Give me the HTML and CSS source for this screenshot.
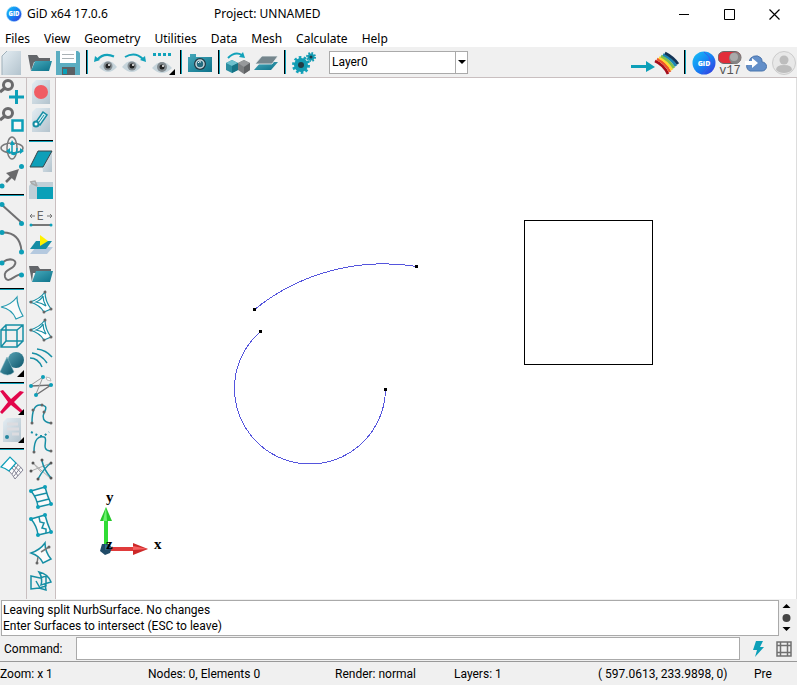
FILE: index.html
```html
<!DOCTYPE html>
<html lang="en">
<head>
<meta charset="utf-8">
<title>GiD x64 17.0.6</title>
<link rel="stylesheet" href="styles.css">
</head>
<body>
<header class="titlebar">
  <svg class="logo" viewBox="0 0 16 16">
    <defs>
      <linearGradient id="blue" x1="0" y1="0" x2="1" y2="1"><stop offset="0" stop-color="#18c4f4"/><stop offset=".5" stop-color="#1484f4"/><stop offset="1" stop-color="#3a30dc"/></linearGradient>
      <linearGradient id="paper" x1="0" y1="0" x2="1" y2="1"><stop offset="0" stop-color="#e4edf3"/><stop offset="1" stop-color="#b3c3cd"/></linearGradient>
      <linearGradient id="teal" x1="0" y1="0" x2="1" y2="1"><stop offset="0" stop-color="#48aabc"/><stop offset="1" stop-color="#0c7189"/></linearGradient>
      <linearGradient id="solid" x1="0" y1="0" x2="1" y2="1"><stop offset="0" stop-color="#58a2b4"/><stop offset="1" stop-color="#0d566b"/></linearGradient>
    </defs>
    <circle cx="8" cy="8" r="7.500" fill="url(#blue)" stroke="#8fd0fa" stroke-dasharray="1 1"/>
    <text x="8" y="10" class="logo-text" font-size="6">GID</text>
  </svg>
  <span class="app-name">GiD x64 17.0.6</span>
  <span class="project">Project: UNNAMED</span>
  <div class="window-buttons">
    <button aria-label="Minimize"><svg width="11" height="11"><path d="M0 5.500h10" stroke="#000"/></svg></button>
    <button aria-label="Maximize"><svg width="11" height="11"><path d="M.5.500h10v10H.5z" fill="none" stroke="#000"/></svg></button>
    <button aria-label="Close"><svg width="11" height="11"><path d="M.5.500l10 10M10.500.500l-10 10" stroke="#000" stroke-width="1.200"/></svg></button>
  </div>
</header>
<nav class="menubar">
  <button>Files</button><button>View</button><button>Geometry</button><button>Utilities</button><button>Data</button><button>Mesh</button><button>Calculate</button><button>Help</button>
</nav>
<div class="toolbar">
  <button class="first" aria-label="New"><svg viewBox="0 0 28 30"><path d="M9 4H23V28H4V9z" fill="url(#paper)"/><path d="M9 4L4 9V28" fill="none" stroke="#9fb0ba"/></svg></button>
  <button aria-label="Open"><svg viewBox="0 0 28 30"><path d="M2 8h9l2 3h11v4H8L5 24z" fill="#63666a"/><path d="M9 14h17l-3 10H5z" fill="url(#teal)"/></svg></button>
  <button aria-label="Save"><svg viewBox="0 0 28 30"><path d="M2 4h22l2 2v22H2z" fill="#5badc1"/><path d="M6 4h16v12H6z" fill="#fff"/><path d="M8 7.500h12M8 11.500h12" stroke="#a9b1b5"/><path d="M8 20h13v8H8z" fill="#5c6165"/><path d="M9 22h4v5H9z" fill="#08a0b8"/></svg></button>
  <span class="vsep"></span>
  <button aria-label="Undo view"><svg viewBox="0 0 28 30"><path d="M5 13Q12 5 22 9.500" fill="none" stroke="#12a2ba" stroke-width="2"/><path d="M2 15l1-6 5 4z" fill="#12a2ba"/><path d="M7 20q9-12 18 0q-9 10-18 0z" fill="#c6d4db"/><circle cx="16" cy="19" r="4.500" fill="#848c91"/><circle cx="16" cy="19" r="2.500" fill="#222"/><circle cx="17" cy="18" r="1" fill="#fff"/></svg></button>
  <button aria-label="Redo view"><svg viewBox="0 0 28 30"><path d="M5 10Q15 4 23 12" fill="none" stroke="#12a2ba" stroke-width="2"/><path d="M26 15l-1-6-5 4z" fill="#12a2ba"/><path d="M2 20q9-12 19 0q-9 10-19 0z" fill="#c6d4db"/><circle cx="12" cy="19" r="4.500" fill="#848c91"/><circle cx="12" cy="19" r="2.500" fill="#222"/><circle cx="13" cy="18" r="1" fill="#fff"/></svg></button>
  <button aria-label="Views"><svg viewBox="0 0 28 30"><path d="M5 7.500h19" stroke="#12a2ba" stroke-width="3" stroke-dasharray="3 2"/><path d="M4 21q10-12 20 0q-10 10-20 0z" fill="#c6d4db"/><circle cx="14" cy="20" r="5" fill="#848c91"/><circle cx="14" cy="20" r="2.500" fill="#222"/><circle cx="15" cy="19" r="1" fill="#fff"/><path d="M27 22v6h-6z"/></svg></button>
  <span class="vsep"></span>
  <button aria-label="Snapshot"><svg viewBox="0 0 28 30"><path d="M4 7h6v3h16v15H2V10h2z" fill="url(#teal)"/><circle cx="14" cy="17" r="6" fill="#233a45"/><circle cx="14" cy="17" r="4" fill="#246b7e" stroke="#c3d6dc" stroke-width="1.500"/><path d="M12 16q1-2 3-1" stroke="#fff" fill="none"/></svg></button>
  <span class="vsep"></span>
  <button aria-label="Change entities"><svg viewBox="0 0 28 30"><path d="M4 11Q11 4 18 8" fill="none" stroke="#12a2ba" stroke-width="2"/><path d="M21 11l-2-6-4 5z" fill="#12a2ba"/><path d="M8 13l6 3v7l-6 3-6-3v-7z" fill="#2b8ea1"/><path d="M8 13l6 3-6 3-6-3z" fill="#6cc0ce"/><path d="M8 19l6-3v7l-6 3z" fill="#167386"/><path d="M20 13l6 3v7l-6 4-6-4v-7z" fill="#7c7e80"/><path d="M20 13l6 3-6 4-6-4z" fill="#97999b"/><path d="M20 20l6-4v7l-6 4z" fill="#606264"/></svg></button>
  <button aria-label="Layers"><svg viewBox="0 0 28 30"><path d="M9 15h17l-7 8H2z" fill="url(#teal)"/><path d="M10 9h16l-6 8H3z" fill="#75868d" stroke="#edf2f4" stroke-width=".800"/></svg></button>
  <span class="vsep"></span>
  <button aria-label="Preferences"><svg viewBox="0 0 28 30"><circle cx="11" cy="18" r="7.500" fill="none" stroke="#12a2ba" stroke-width="3" stroke-dasharray="2.500 2.210"/><circle cx="11" cy="18" r="7" fill="#129bb2"/><circle cx="11" cy="18" r="3" fill="#233c45"/><circle cx="21" cy="10" r="4" fill="none" stroke="#129bb2" stroke-width="2" stroke-dasharray="1.600 1.540"/><circle cx="21" cy="10" r="3.500" fill="#129bb2"/><circle cx="21" cy="10" r="1.500" fill="#233c45"/></svg></button>
  <label class="layer-box"><select aria-label="Layer"><option>Layer0</option></select><span class="drop"><svg width="11" height="20"><path d="M2 8h8L6 12z"/></svg></span></label>
  <span class="spacer"></span>
  <button class="wide" aria-label="Postprocess"><svg viewBox="0 0 50 30"><path d="M1 18h15v-4l9 6-9 5v-4H1z" fill="#0d9fb8"/><g fill="none" stroke-width="2.800"><path d="M25 14Q34 18 38 27" stroke="#a40d1c"/><path d="M27 12Q36 16 40 25" stroke="#f1542a"/><path d="M29 10.500Q37 14 42 23" stroke="#ffd62e"/><path d="M31 9Q39 13 44 21" stroke="#7fc04c"/><path d="M33 7.500Q41 11 46 19" stroke="#1b87b5"/><path d="M35 6Q43 10 48 17" stroke="#143456"/></g></svg></button>
  <span class="vsep"></span>
  <button aria-label="GiD"><svg viewBox="0 0 28 30"><circle cx="14" cy="16" r="11.500" fill="url(#blue)"/><path d="M14 5q13 8-1 22" stroke="#3c5cec" fill="none"/><text x="14" y="19" class="logo-text" font-size="7">GiD</text></svg></button>
  <button class="toggle" aria-label="Version 17"><svg viewBox="0 0 24 30"><rect x="0" y="4.500" width="23" height="12" rx="6" fill="#e22d39" stroke="#686868"/><circle cx="17" cy="11" r="6" fill="#858585"/><circle cx="16" cy="10" r="4" fill="#aaa"/><text x="12" y="27" class="version">v17</text></svg></button>
  <button aria-label="Cloud"><svg viewBox="0 0 28 30"><path d="M8 24a5 5 0 0 1-1-9a7 7 0 0 1 12-4a5 5 0 0 1 1 4a4.500 4.500 0 0 1 0 9z" fill="#638fc9" stroke="#4974ac"/><path d="M3 14h7v-3l6 5-6 5v-3H3z" fill="#fff"/></svg></button>
  <button class="last" aria-label="Account"><svg viewBox="0 0 28 30"><circle cx="14" cy="16" r="11.500" fill="#e8e8e8" stroke="#ccc"/><circle cx="14" cy="13" r="4.500" fill="#bdbdbd"/><path d="M6 23q0-5 8-5t8 5q-3 3-8 3t-8-3z" fill="#bdbdbd"/></svg></button>
</div>
<main class="workspace">
  <div class="tools tools-geometry">
    <button aria-label="Zoom in"><svg viewBox="0 0 24 28"><circle cx="8" cy="7" r="4.500" fill="none" stroke="#6a6a6c" stroke-width="3"/><path d="M5 10l-5 4" stroke="#6a6a6c" stroke-width="3"/><path d="M16.500 12v14M9 19h15" stroke="#0d9fb8" stroke-width="3"/></svg></button>
    <button aria-label="Zoom frame"><svg viewBox="0 0 24 28"><circle cx="8" cy="7" r="4.500" fill="none" stroke="#6a6a6c" stroke-width="3"/><path d="M5 10l-5 4" stroke="#6a6a6c" stroke-width="3"/><path d="M12.500 14.500h10v10h-10z" fill="#fff" fill-opacity=".5" stroke="#0d9fb8" stroke-width="2.500"/></svg></button>
    <button aria-label="Rotate"><svg viewBox="0 0 24 28"><g fill="none" stroke-width="1.500"><ellipse cx="12" cy="14" rx="11" ry="5" stroke="#77787a"/><ellipse cx="12" cy="14" rx="5" ry="11" stroke="#77787a"/><path d="M12 8v12q5 2 5-6M7 17q8 4 14 0" stroke="#0d9fb8"/></g><path d="M10 11l2-5 3 5zM10 14v6l-4-3zM20 14l4 3-4 3z" fill="#0d9fb8"/></svg></button>
    <button aria-label="Pan"><svg viewBox="0 0 24 28"><path d="M6 20l8-8" stroke="#6a6a6c" stroke-width="2.500"/><path d="M19 7l-4 12-9-8z" fill="#6a6a6c"/><circle cx="2" cy="24" r="2.500" fill="#0d9fb8"/><circle cx="21.500" cy="4.500" r="2.500" fill="#0d9fb8"/></svg></button>
    <span class="hsep"></span>
    <button aria-label="Line"><svg viewBox="0 0 24 28"><path d="M2 5l20 18" stroke="#707072" stroke-width="2"/><circle cx="2" cy="4.500" r="2.500" fill="#0d9fb8"/><circle cx="21.500" cy="23.500" r="2.500" fill="#0d9fb8"/></svg></button>
    <button aria-label="Arc"><svg viewBox="0 0 24 28"><path d="M2 4.500Q20 4 21.500 23" fill="none" stroke="#707072" stroke-width="2"/><circle cx="2" cy="4.500" r="2.500" fill="#0d9fb8"/><circle cx="21.500" cy="24" r="2.500" fill="#0d9fb8"/></svg></button>
    <button aria-label="Spline"><svg viewBox="0 0 24 28"><path d="M3 6C10 1 19 4 14 10C11 14 3 14 5 21C8 29 15 18 22 18" fill="none" stroke="#707072" stroke-width="2"/><circle cx="2" cy="7" r="2.500" fill="#0d9fb8"/><circle cx="21.500" cy="19" r="2.500" fill="#0d9fb8"/></svg></button>
    <span class="hsep"></span>
    <button aria-label="Surface"><svg viewBox="0 0 24 28"><path d="M1 13Q11 11 17 3Q17 12 23 22L16 25Q12 15 1 13z" fill="#fafafa" stroke="#279ab0" stroke-width="1.200"/></svg></button>
    <button aria-label="Volume"><svg viewBox="0 0 24 28"><path d="M1 8h16v17H1zM6 3h17v16H6zM1 8l5-5M17 8l6-5M17 25l6-6M1 25l5-6" fill="none" stroke="#168ea4" stroke-width="1.500"/></svg></button>
    <button aria-label="Solids"><svg viewBox="0 0 24 28"><circle cx="16" cy="10" r="8" fill="url(#solid)"/><path d="M7 7l7 15q-6 6-14 0z" fill="url(#solid)" stroke="#7fb4c1" stroke-width=".500"/><path d="M24 20v7h-7z"/></svg></button>
    <span class="hsep"></span>
    <button aria-label="Delete"><svg viewBox="0 0 24 28"><path d="M0 3l3-1 8 9L20 3l4 1-10 10 9 9-2 2-10-8-9 9-2-2 8-10z" fill="#e2064b"/><path d="M24 21v6h-6z"/></svg></button>
    <button aria-label="List"><svg viewBox="0 0 24 28"><path d="M7 2h14v24H3V6z" fill="url(#paper)"/><path d="M7 8h11M7 13h12M12 18h7" stroke="#dcdce0" stroke-width="3"/><circle cx="7" cy="21" r="2" fill="#2587a0"/><path d="M24 21v6h-6z"/></svg></button>
    <span class="hsep"></span>
    <button aria-label="Toggle mesh"><svg viewBox="0 0 24 28"><path d="M16 9Q20 12 23 16L15 25Q13 21 9 17z" fill="#fafafa" stroke="#858596"/><path d="M18 11l-6 9M21 13l-7 9M14 12q4 3 7 7M12 14q3 3 6 8" fill="none" stroke="#858596"/><path d="M1 13l9-10 6 6-7 8Q5 14 1 13z" fill="#fff" stroke="#0d9fb8" stroke-width="1.200"/></svg></button>
  </div>
  <div class="tools tools-macros">
    <button aria-label="Record"><svg viewBox="0 0 24 28"><path d="M7 2h14v24H3V6z" fill="url(#paper)"/><circle cx="12" cy="14" r="7" fill="#f05d64"/></svg></button>
    <button aria-label="Edit macro"><svg viewBox="0 0 24 28"><path d="M7 2h14v24H3V6z" fill="url(#paper)"/><path d="M14 6l4 3-7 10-4-3z" fill="#d8edf2" stroke="#168ea4" stroke-width="1.500"/><path d="M15 9l-5 7" stroke="#168ea4"/><circle cx="7" cy="18" r="2.500" fill="#fff" stroke="#168ea4" stroke-width="2"/></svg></button>
    <span class="hsep hsep-tall"></span>
    <button aria-label="Plane"><svg viewBox="0 0 24 28"><path d="M12 3h11v21h-9z" fill="url(#paper)"/><path d="M9 3h14l-9 16H1z" fill="#0d9fb8" stroke="#39464b"/></svg></button>
    <button aria-label="Window"><svg viewBox="0 0 24 28"><path d="M3 6h21v17H0V10z" fill="#c0cfd7"/><path d="M8 11h16v12H8z" fill="#0aa0b8"/><path d="M1 6l5-1 2 5M2 7l6 3" fill="none" stroke="#aaa" stroke-width="1.500"/></svg></button>
    <button aria-label="Edge length"><svg viewBox="0 0 24 28"><text x="11" y="16" class="edge">E</text><path d="M1 12h5M18 12h5M3 10l-2 2 2 2M21 10l2 2-2 2" stroke="#777" fill="none"/><path d="M2 21h20" stroke="#777" stroke-width="2"/><circle cx="2" cy="21" r="1.500" fill="#0d9fb8"/><circle cx="22" cy="21" r="1.500" fill="#0d9fb8"/></svg></button>
    <button aria-label="Send to layer"><svg viewBox="0 0 24 28"><path d="M7 15h17l-6 7H1z" fill="#b4c9df"/><path d="M7 9h16l-6 8H1z" fill="#158da5"/><path d="M11 3l8 6-8 5z" fill="#fff200"/></svg></button>
    <button aria-label="Open layer"><svg viewBox="0 0 24 28"><path d="M0 6h9l2 3h11v4H4l-1 9z" fill="#63666a"/><path d="M7 11h17l-3 11H3z" fill="url(#teal)"/></svg></button>
    <button aria-label="NURBS surface"><svg viewBox="0 0 24 28"><path d="M1 14Q11 11 16 4Q16 13 22 21L15 24Q11 17 1 14z" fill="#fff" stroke="#168ea4" stroke-width="1.200"/><path d="M7 14q5-2 7-6q0 5 3 10-4-3-10-4z" fill="none" stroke="#168ea4" stroke-width="1.200"/><g fill="#666"><circle cx="2" cy="14" r="1.500"/><circle cx="16" cy="4" r="1.500"/><circle cx="22" cy="21" r="1.500"/><circle cx="15" cy="24" r="1.500"/></g></svg></button>
    <button aria-label="Trimmed surface"><svg viewBox="0 0 24 28"><path d="M1 14Q11 11 16 4Q16 13 22 21L15 24Q11 17 1 14z" fill="#fff" stroke="#168ea4" stroke-width="1.200"/><path d="M7 14q5-2 7-6q0 5 3 10-4-3-10-4z" fill="none" stroke="#168ea4" stroke-width="1.200"/><g fill="#666"><circle cx="2" cy="14" r="1.500"/><circle cx="16" cy="4" r="1.500"/><circle cx="22" cy="21" r="1.500"/><circle cx="15" cy="24" r="1.500"/></g></svg></button>
    <button aria-label="Parallel lines"><svg viewBox="0 0 24 28"><path d="M1 14Q9 14 13 23M3 9Q12 10 18 19M8 5Q17 6 23 13" fill="none" stroke="#168ea4" stroke-width="1.500"/></svg></button>
    <button aria-label="Intersect lines"><svg viewBox="0 0 24 28"><path d="M2 14l20-1L7 23" fill="none" stroke="#707072" stroke-width="1.500"/><path d="M2 13L14 5 7 22" fill="none" stroke="#999"/><path d="M17 5l4 1 1 3-4-1z" fill="#fff" stroke="#bbb"/><circle cx="2" cy="14" r="2" fill="#0d9fb8"/><circle cx="14" cy="5" r="2" fill="#0d9fb8"/><circle cx="22" cy="13" r="2" fill="#0d9fb8"/><circle cx="7" cy="23" r="2" fill="#0d9fb8"/></svg></button>
    <button aria-label="Fit spline"><svg viewBox="0 0 24 28"><path d="M3 23C3 12 5 4 12 5S17 9 15 13S14 22 21 23" fill="none" stroke="#168ea4" stroke-width="1.500"/><g fill="#666"><circle cx="3" cy="23" r="1.500"/><circle cx="4" cy="10" r="1.500"/><circle cx="13" cy="5" r="1.500"/><circle cx="15" cy="12" r="1.500"/><circle cx="22" cy="23" r="1.500"/></g></svg></button>
    <button aria-label="Edit spline"><svg viewBox="0 0 24 28"><path d="M5 24C5 10 10 8 15 9S11 22 21 23" fill="none" stroke="#168ea4" stroke-width="1.500"/><path d="M2 4l8 4h5l5-4" fill="none" stroke="#168ea4" stroke-width="2" stroke-dasharray="2 3"/><circle cx="5" cy="24" r="1.500" fill="#666"/><circle cx="22" cy="23" r="1.500" fill="#666"/></svg></button>
    <button aria-label="Divide lines"><svg viewBox="0 0 24 28"><path d="M4 7l17 15M2 15l20-8M4 7l8 9" stroke="#aaa"/><path d="M13 5Q15 14 22 22M9 23Q15 12 22 7" fill="none" stroke="#168ea4" stroke-width="1.500"/><g fill="#555"><circle cx="4" cy="7" r="1.500"/><circle cx="2" cy="15" r="1.500"/><circle cx="13" cy="4" r="1.500"/><circle cx="22" cy="7" r="1.500"/><circle cx="22" cy="22" r="1.500"/><circle cx="9" cy="23" r="1.500"/></g></svg></button>
    <button aria-label="Split surface"><svg viewBox="0 0 24 28"><path d="M2 7l14-4q2 8 6 17l-13 3Q8 14 2 7zM5 12l13-3M8 18l12-3" fill="#fafafa" stroke="#168ea4" stroke-width="1.500"/><g fill="#0d9fb8"><circle cx="2" cy="7" r="2"/><circle cx="16" cy="3" r="2"/><circle cx="22" cy="20" r="2"/><circle cx="9" cy="23" r="2"/></g></svg></button>
    <button aria-label="Split near point"><svg viewBox="0 0 24 28"><path d="M2 7l14-4q2 8 6 17l-13 3Q8 14 2 7z" fill="#fafafa" stroke="#168ea4" stroke-width="1.500"/><path d="M10 5l1 5 4 1-2 5 4 1v4" fill="none" stroke="#168ea4" stroke-width="1.500"/><g fill="#0d9fb8"><circle cx="2" cy="7" r="2"/><circle cx="16" cy="3" r="2"/><circle cx="22" cy="20" r="2"/><circle cx="9" cy="23" r="2"/></g></svg></button>
    <button aria-label="Intersect surface and line"><svg viewBox="0 0 24 28"><path d="M2 13Q11 10 16 3Q16 12 22 19l-8 4Q11 16 2 13z" fill="#fafafa" stroke="#168ea4" stroke-width="1.500"/><path d="M8 23l1-6M12 12l8-5" fill="none" stroke="#777" stroke-width="1.500"/><circle cx="8" cy="23" r="1.500" fill="#666"/><circle cx="20" cy="7" r="1.500" fill="#666"/></svg></button>
    <button aria-label="Intersect surfaces"><svg viewBox="0 0 24 28"><path d="M2 8l9 2 6-2v10l-7 2-8 1zM10 4q9 2 12 10l-10 3q2-7-2-13zM10 20l7 2-1-6M7 13l4 7" fill="none" stroke="#168ea4" stroke-width="1.500"/></svg></button>
  </div>
  <svg class="canvas" role="img" aria-label="Model view">
    <g fill="none" stroke="#5555dd" shape-rendering="crispEdges">
      <path d="M198.500 231.500A206 206 0 0 1 361 188.500"/>
      <path d="M204.500 253.500A75.500 75.500 0 1 0 329.500 311"/>
      <path d="M468.500 142.500h128v144h-128z" stroke="#000"/>
    </g>
    <path d="M197 230h3v3h-3zM359 187h3v3h-3zM203 252h3v3h-3zM328 310h3v3h-3z"/>
    <path d="M50 443v27" stroke="#30dc35" stroke-width="4"/>
    <path d="M50 429l6 14H44z" fill="#27c82b"/><path d="M50 429l1 14h-4z" fill="#6cf36f"/>
    <path d="M50 471h28" stroke="#e03b3b" stroke-width="4"/>
    <path d="M77 465l15 6-15 6z" fill="#cd2929"/><path d="M77 468l15 3-15 1z" fill="#f56060"/>
    <path d="M46 466h7l3 4-2 5-5 2-5-4z" fill="#204b68"/><path d="M49 466l7 4-7 2z" fill="#2f7292"/>
    <g class="axis"><text x="50" y="424">y</text><text x="98" y="471">x</text><text x="50" y="471">z</text></g>
  </svg>
</main>
<section class="messages">
  <div class="log"><div>Leaving split NurbSurface. No changes</div><div>Enter Surfaces to intersect (ESC to leave)</div></div>
  <div class="scroller"><svg width="9" height="28"><path d="M4.500 1l4 4h-8zM4.500 28l4-4h-8z"/><circle cx="4.500" cy="15" r="4" fill="#444"/></svg></div>
</section>
<section class="command">
  <label for="command">Command:</label>
  <input id="command" type="text">
  <button aria-label="Quick command"><svg width="16" height="18"><path d="M6 1h7l-3 6h4L5 17l2-7H3z" fill="#0d9fb8"/></svg></button>
  <button aria-label="Grid"><svg width="16" height="18"><path d="M1 2h14v14H1zM4.500 2v14M11.500 2v14M1 5.500h14M1 12.500h14" fill="none" stroke="#707070" stroke-width="1.500"/></svg></button>
</section>
<footer class="status">
  <span>Zoom: x 1</span><span>Nodes: 0, Elements 0</span><span>Render: normal</span><span>Layers: 1</span><span>( 597.0613, 233.9898, 0)</span><span>Pre</span>
</footer>
</body>
</html>
```

FILE: styles.css
```css
*, *::before { box-sizing: border-box; }
body {
  margin: 0;
  height: 100vh;
  display: flex;
  flex-direction: column;
  overflow: hidden;
  background: #f0f0f0;
  color: #000;
  font: 12px/16px "Noto Sans", "Open Sans", sans-serif;
}
button { margin: 0; padding: 0; border: 0; background: none; font: inherit; color: inherit; }
svg { display: block; }

.titlebar { display: flex; align-items: center; height: 28px; padding-left: 6px; background: #fff; flex: none; }
.logo { width: 16px; height: 16px; }
.logo-text { fill: #fff; font-family: "Open Sans", sans-serif; font-weight: 800; text-anchor: middle; }
.app-name { margin-left: 5px; width: 187px; }
.window-buttons { display: flex; margin-left: auto; }
.window-buttons button { width: 45px; height: 28px; display: grid; place-items: center; }

.menubar { display: flex; gap: 14px; height: 19px; padding-left: 5px; background: #fff; flex: none; }
.menubar button { height: 21px; }

.toolbar { display: flex; align-items: center; height: 31px; border-bottom: 1px solid #c9bfc0; flex: none; }
.toolbar button { width: 28px; height: 30px; flex: none; }
.toolbar svg { height: 30px; width: 100%; }
.toolbar .first { margin-left: -2px; }
.toolbar .wide { width: 50px; }
.toolbar .toggle { width: 24px; }
.toolbar .last { margin-right: -1px; }
.vsep { width: 10px; height: 24px; flex: none; display: flex; justify-content: center; }
.vsep::before { content: ""; width: 2px; background: #000; border-right: 1px solid #0d9fb8; }
.spacer { flex: 1; }
.version { font: 12px "Liberation Mono", monospace; fill: #555; text-anchor: middle; }
.layer-box { display: flex; width: 139px; height: 23px; margin-left: 11px; border: 1px solid #aaa; background: #fff; }
.layer-box select { appearance: none; flex: 1; min-width: 0; border: 0; padding: 0 2px; background: #fff; font: 12px Roboto, sans-serif; color: inherit; }
.layer-box .drop { width: 12px; border-left: 1px solid #aaa; }
.layer-box .drop svg { width: 11px; height: 20px; }

.workspace { display: flex; flex: 1; min-height: 0; }
.tools { display: flex; flex-direction: column; border-right: 1px solid #c9bfc0; flex: none; }
.tools-geometry { width: 27px; }
.tools-macros { width: 29px; padding-left: 2px; }
.tools button { width: 24px; height: 28px; flex: none; }
.tools svg { width: 24px; height: 28px; }
.hsep { height: 10px; width: 24px; display: flex; align-items: center; flex: none; }
.hsep::before { content: ""; flex: 1; height: 2px; background: #000; border-bottom: 1px solid #0d9fb8; }
.hsep-tall { height: 14px; }
.edge { font: 13px "Open Sans", sans-serif; fill: #666; text-anchor: middle; }
.canvas { flex: 1; min-width: 0; height: 100%; background: #fff; border-right: 1px solid #ddd; }
.axis { font: bold 15px "Liberation Serif", serif; text-anchor: start; }

.messages, .command, .status { font-family: Roboto, "Noto Sans", sans-serif; }
.messages { display: flex; padding: 1px 0 0 1px; flex: none; }
.log { flex: 1; padding: 1px; border: 1px solid #aaa; background: #fff; height: 36px; }
.scroller { width: 18px; padding: 3px 0 0 3px; }
.command { display: flex; align-items: center; height: 26px; border-bottom: 1px solid #999; flex: none; }
.command label { width: 76px; padding-left: 4px; }
.command input { flex: 1; min-width: 0; height: 23px; border: 1px solid #aaa; background: #fff; padding: 0 2px; font: inherit; }
.command button { width: 26px; display: grid; place-items: center; }
.command button:first-of-type { margin-left: 5px; }
.status { display: grid; grid-template-columns: 148fr 187fr 119fr 144fr 156fr 43fr; align-items: center; height: 23px; flex: none; white-space: nowrap; }
```
